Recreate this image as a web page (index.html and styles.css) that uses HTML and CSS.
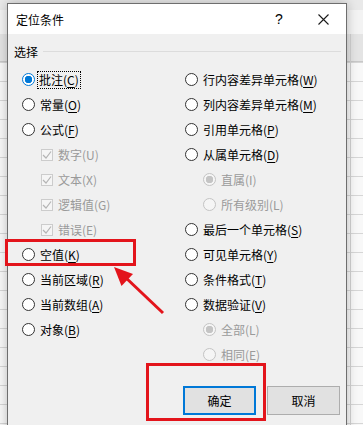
FILE: index.html
```html
<!DOCTYPE html>
<html lang="zh-CN">
<head>
  <meta charset="UTF-8" />
  <title>定位条件</title>
  <link rel="stylesheet" href="styles.css">
</head>
<body>
  <div class="dialog">
    <div class="titlebar">
      <span class="title">定位条件</span>
      <span class="help">?</span>
      <span class="close">
        <svg width="11" height="11" viewBox="0 0 11 11"><path d="M0.5 0.5 L10.5 10.5 M10.5 0.5 L0.5 10.5" stroke="#1a1a1a" stroke-width="1.1" fill="none"/></svg>
      </span>
    </div>
    <div class="content">
      <div class="group-head"><span>选择</span><i class="rule"></i></div>
      <div class="options">
        <div class="col">
          <div class="opt"><span class="radio on"></span><span class="focus">批注(<u>C</u>)</span></div>
          <div class="opt"><span class="radio"></span><span>常量(<u>O</u>)</span></div>
          <div class="opt"><span class="radio"></span><span>公式(<u>F</u>)</span></div>
          <div class="opt sub off"><span class="check"><svg width="10" height="10" viewBox="0 0 10 10"><path d="M1 5 L4 8 L9 1.5" stroke="#b4b4b4" stroke-width="1.2" fill="none"/></svg></span><span>数字(U)</span></div>
          <div class="opt sub off"><span class="check"><svg width="10" height="10" viewBox="0 0 10 10"><path d="M1 5 L4 8 L9 1.5" stroke="#b4b4b4" stroke-width="1.2" fill="none"/></svg></span><span>文本(X)</span></div>
          <div class="opt sub off"><span class="check"><svg width="10" height="10" viewBox="0 0 10 10"><path d="M1 5 L4 8 L9 1.5" stroke="#b4b4b4" stroke-width="1.2" fill="none"/></svg></span><span>逻辑值(G)</span></div>
          <div class="opt sub off"><span class="check"><svg width="10" height="10" viewBox="0 0 10 10"><path d="M1 5 L4 8 L9 1.5" stroke="#b4b4b4" stroke-width="1.2" fill="none"/></svg></span><span>错误(E)</span></div>
          <div class="opt"><span class="radio"></span><span>空值(<u>K</u>)</span></div>
          <div class="opt"><span class="radio"></span><span>当前区域(<u>R</u>)</span></div>
          <div class="opt"><span class="radio"></span><span>当前数组(<u>A</u>)</span></div>
          <div class="opt"><span class="radio"></span><span>对象(<u>B</u>)</span></div>
        </div>
        <div class="col">
          <div class="opt"><span class="radio"></span><span>行内容差异单元格(<u>W</u>)</span></div>
          <div class="opt"><span class="radio"></span><span>列内容差异单元格(<u>M</u>)</span></div>
          <div class="opt"><span class="radio"></span><span>引用单元格(<u>P</u>)</span></div>
          <div class="opt"><span class="radio"></span><span>从属单元格(<u>D</u>)</span></div>
          <div class="opt sub off"><span class="radio dis on"></span><span>直属(I)</span></div>
          <div class="opt sub off"><span class="radio dis"></span><span>所有级别(L)</span></div>
          <div class="opt"><span class="radio"></span><span>最后一个单元格(<u>S</u>)</span></div>
          <div class="opt"><span class="radio"></span><span>可见单元格(<u>Y</u>)</span></div>
          <div class="opt"><span class="radio"></span><span>条件格式(<u>T</u>)</span></div>
          <div class="opt"><span class="radio"></span><span>数据验证(<u>V</u>)</span></div>
          <div class="opt sub off"><span class="radio dis on"></span><span>全部(L)</span></div>
          <div class="opt sub off"><span class="radio dis"></span><span>相同(E)</span></div>
        </div>
      </div>
      <div class="buttons">
        <button class="btn primary">确定</button>
        <button class="btn">取消</button>
      </div>
    </div>
  </div>

  <div class="mark mark-empty"></div>
  <div class="mark mark-ok"></div>
  <svg class="arrow" width="363" height="425" viewBox="0 0 363 425">
    <line x1="163" y1="313" x2="124" y2="276" stroke="#e3141b" stroke-width="3"/>
    <polygon points="114,267 121.5,286 133,274" fill="#e3141b"/>
  </svg>
</body>
</html>
```

FILE: styles.css
```css
html, body {
  margin: 0;
  height: 100%;
  overflow: hidden;
}
body {
  position: relative;
  font-family: "Noto Sans CJK SC", "Liberation Sans", sans-serif;
  font-size: 12px;
  color: #000;
  background:
    linear-gradient(to right, transparent 350px, #d2d2d2 350px, #d2d2d2 351px, transparent 351px) 0 34px / 100% 100% no-repeat,
    linear-gradient(#e9e9e9 0 10px, #f3f3f3 10px 34px, #e4e4e4 34px 61px, #c8c8c8 61px 62px) 0 0 / 100% 62px no-repeat,
    repeating-linear-gradient(180deg, #f8f8f8 0 18px, #d6d6d6 18px 19px) 0 44px / 100% 400px no-repeat,
    #f8f8f8;
}
.dialog {
  box-sizing: border-box;
  margin: 3px 0 0 7px;
  width: 340px;
  height: 440px;
  border: 1px solid #6e6e6e;
  background: #f0f0f0;
  box-shadow: 0 0 10px rgba(0, 0, 0, 0.25);
}
.titlebar {
  height: 30px;
  background: #fff;
  display: flex;
  align-items: center;
  padding-left: 8px;
}
.title {
  font-size: 12px;
  letter-spacing: 0;
  flex: 1;
}
.help {
  font-family: "Liberation Sans", sans-serif;
  font-size: 14px;
  width: 12px;
  text-align: center;
  margin-right: 33px;
}
.close {
  display: flex;
  width: 11px;
  margin-right: 17px;
}
.content {
  padding-top: 9px;
}
.group-head {
  display: flex;
  align-items: center;
  height: 16px;
  padding-left: 6px;
  margin-right: 5px;
}
.rule {
  flex: 1;
  height: 1px;
  background: #dcdcdc;
  margin-left: 5px;
}
.options {
  display: grid;
  grid-template-columns: 163px 1fr;
  padding-left: 14px;
  margin-top: 8px;
}
.opt {
  display: flex;
  align-items: center;
  gap: 5px;
  height: 25px;
  white-space: nowrap;
}
.opt u {
  text-underline-offset: 2px;
}
.opt.sub {
  padding-left: 18px;
}
.col:first-child .opt.sub {
  padding-left: 19px;
}
.off {
  color: #9a9a9a;
}
.radio {
  box-sizing: border-box;
  width: 13px;
  height: 13px;
  border: 1px solid #333;
  border-radius: 50%;
  background: #fff;
  flex: none;
}
.radio.on {
  border-color: #0078d7;
  background: radial-gradient(circle, #0078d7 0 3.5px, #fff 4px);
}
.radio.dis {
  border-color: #c4c4c4;
  background: #f5f5f5;
}
.radio.dis.on {
  background: radial-gradient(circle, #c4c4c4 0 3.5px, #f5f5f5 4px);
}
.check {
  box-sizing: border-box;
  width: 12px;
  height: 12px;
  border: 1px solid #cccccc;
  background: #f5f5f5;
  display: flex;
  align-items: center;
  justify-content: center;
  flex: none;
}
.focus {
  outline: 1px dotted #000;
  outline-offset: 0;
  padding: 0 1px;
  margin-left: -2px;
  line-height: 16px;
}
.buttons {
  display: flex;
  justify-content: flex-end;
  gap: 11px;
  padding-right: 6px;
  margin-top: 19px;
}
.btn {
  box-sizing: border-box;
  width: 73px;
  height: 29px;
  font-family: "Noto Sans CJK SC", sans-serif;
  font-size: 12px;
  color: #000;
  background: #e1e1e1;
  border: 1px solid #adadad;
  padding: 0;
}
.btn.primary {
  border: 2px solid #0078d7;
}
.mark {
  position: absolute;
  box-sizing: border-box;
  border: 3px solid #e3141b;
}
.mark-empty {
  left: 5px;
  top: 239px;
  width: 131px;
  height: 27px;
}
.mark-ok {
  left: 146px;
  top: 363px;
  width: 120px;
  height: 58px;
}
.arrow {
  position: absolute;
  left: 0;
  top: 0;
  pointer-events: none;
}
```
